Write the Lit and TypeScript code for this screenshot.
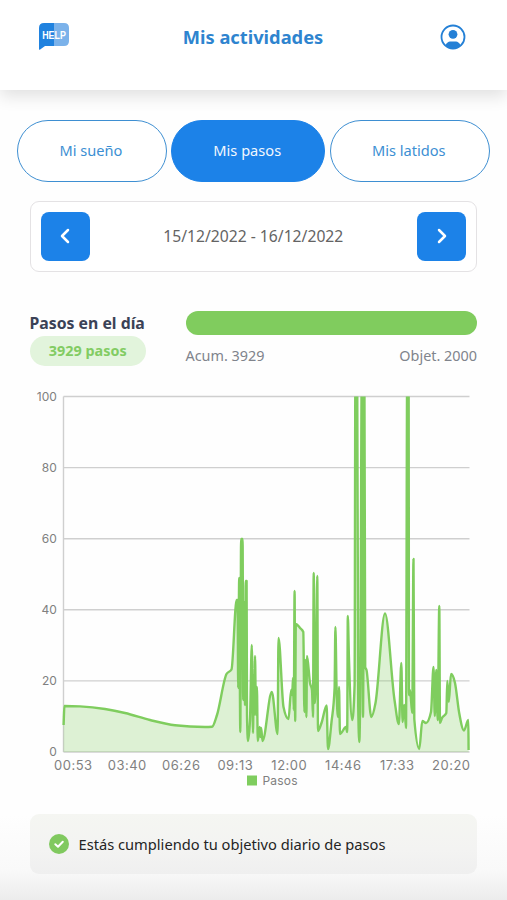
import { LitElement, html, css, svg } from "lit";
import { customElement, property } from "lit/decorators.js";
import { classMap } from "lit/directives/class-map.js";

type Pt = [number, number];

// Plot frame, in the chart's own units (1 unit = 1px).
const LEFT = 63.5;
const RIGHT = 469.5;
const TOP = 6.5;
const BASE = 362;

// Step samples: x position and height measured down from the top of the chart.
const SAMPLES: Pt[] = [
  [63.6, 335], [64.4, 316], [80, 316.4], [105, 319], [125, 323], [150, 330], [175, 335.3], [205, 337], [212, 336.8],
  [217, 325], [226.5, 284], [231.5, 279.5], [236.6, 210], [237.6, 210], [238.2, 298], [239.2, 188], [240.3, 342], [241.1, 149], [242.6, 149],
  [243.2, 310], [244, 212], [245, 315], [245.7, 191], [246.6, 191], [247, 325], [248, 351], [250, 330], [251.8, 255], [253, 343],
  [253.8, 285], [254.3, 325], [255, 266], [256, 325], [256.9, 297], [257.8, 351], [259.7, 337], [260.4, 347], [261.2, 338], [262.5, 351], [271.8, 302], [277.6, 344],
  [278.5, 248], [283.5, 317], [288.5, 329], [291.2, 300], [292.2, 305], [293, 288], [293.8, 320], [294.6, 201], [295.2, 331], [295.8, 234],
  [300, 238], [303.3, 242], [304.4, 322], [305.3, 270], [306.4, 327], [307, 266], [310, 293], [312, 300], [313, 327], [313.7, 183],
  [314.8, 313], [316, 280], [317.3, 186], [318, 341], [321.8, 332], [326.6, 315.5], [328, 359], [331.5, 332],
  [334.6, 298], [335.4, 237], [336.6, 300], [338, 327], [339, 297], [340, 344], [346, 337], [347.2, 342], [347.8, 226], [349, 270], [352.3, 330],
  [354.6, 295], [355.4, -20], [357.2, -20], [358.2, 315], [359.3, 352], [360.4, 280], [361.8, -20], [363, 327], [364.4, -20], [365.2, 277],
  [366.5, 280], [371.3, 327], [375.5, 313], [385, 223.5], [394.5, 310], [398.9, 334], [401.3, 273], [402.6, 332],
  [404.3, 315], [406, 338], [407.2, -20], [408.6, -20], [409, 305], [410, 300], [412.2, 323], [413.5, 169], [414.3, 329], [419.3, 359],
  [422.3, 331], [426, 333], [431, 322], [433.5, 277], [434.8, 326], [436.3, 280], [437.7, 330], [439.3, 216], [440, 333],
  [442, 328], [446.3, 323], [447.3, 291], [448.8, 312], [451, 284], [455, 293], [459.2, 323], [464, 340.5], [468.3, 330], [468.6, 360],
];

/** Smooth path that never overshoots its samples (Steffen tangents). */
function smooth(p: Pt[]): string {
  const n = p.length;
  const m = new Array<number>(n).fill(0);
  const slope = (i: number) => (p[i + 1][1] - p[i][1]) / (p[i + 1][0] - p[i][0]);
  for (let i = 1; i < n - 1; i++) {
    const a = slope(i - 1);
    const b = slope(i);
    const h0 = p[i][0] - p[i - 1][0];
    const h1 = p[i + 1][0] - p[i][0];
    const q = (a * h1 + b * h0) / (h0 + h1);
    m[i] = (Math.sign(a) + Math.sign(b)) * Math.min(Math.abs(a), Math.abs(b), 0.5 * Math.abs(q));
  }
  m[0] = slope(0);
  m[n - 1] = slope(n - 2);
  let d = `M${p[0][0]},${p[0][1]}`;
  for (let i = 0; i < n - 1; i++) {
    const h = (p[i + 1][0] - p[i][0]) / 3;
    d += `C${(p[i][0] + h).toFixed(2)},${(p[i][1] + m[i] * h).toFixed(2)} ${(p[i + 1][0] - h).toFixed(2)},${(p[i + 1][1] - m[i + 1] * h).toFixed(2)} ${p[i + 1][0]},${p[i + 1][1]}`;
  }
  return d;
}

@customElement("steps-chart")
export class StepsChart extends LitElement {
  static styles = css`
    :host { display: block; height: 400px; }
    svg { display: block; }
    .grid { stroke: #cfcfcf; stroke-width: 1.4; }
    .line { fill: none; stroke: #7fcd5e; stroke-width: 2.4; stroke-linejoin: round; }
    .area { fill: #7fcd5e; fill-opacity: 0.26; }
    text { font-family: Inter, "Liberation Sans", sans-serif; fill: #808080; }
    .y { font-size: 12px; text-anchor: end; letter-spacing: 0.1px; }
    .x { font-size: 13px; text-anchor: middle; letter-spacing: 0.5px; }
    .legend { font-size: 12px; letter-spacing: 0.2px; }
    .key { fill: #7fcd5e; }
  `;

  render() {
    const line = smooth(SAMPLES);
    const area = `${line}L468.6,${BASE}L${LEFT},${BASE}Z`;
    const step = (BASE - TOP) / 5;
    const hours = ["00:53", "03:40", "06:26", "09:13", "12:00", "14:46", "17:33", "20:20"];
    return html`<svg width="507" height="400" viewBox="0 0 507 400">
      <defs><clipPath id="plot"><rect x="61" y=${TOP} width="410" height=${BASE - TOP}></rect></clipPath></defs>
      ${[0, 1, 2, 3, 4, 5].map((i) => svg`
        <line class="grid" x1=${LEFT} x2=${RIGHT} y1=${TOP + i * step} y2=${TOP + i * step}></line>
        <text class="y" x="57" y=${TOP + i * step + 4}>${100 - i * 20}</text>`)}
      <line class="grid" x1=${LEFT} x2=${LEFT} y1=${TOP} y2=${BASE}></line>
      <g clip-path="url(#plot)">
        <path class="area" d=${area}></path>
        <path class="line" d=${line}></path>
      </g>
      ${hours.map((t, i) => svg`<text class="x" x=${73.3 + i * 54} y="380">${t}</text>`)}
      <rect class="key" x="247" y="385.500" width="10" height="10"></rect>
      <text class="legend" x="262.5" y="395">Pasos</text>
    </svg>`;
  }
}

@customElement("app-root")
export class AppRoot extends LitElement {
  @property() active = "Mis pasos";

  static styles = css`
    :host {
      display: flex; flex-direction: column; box-sizing: border-box; height: 900px; overflow: hidden;
      font-family: "Noto Sans", sans-serif;
      background: linear-gradient(#fefefe 0, #fefefe 815px, #f9f9f9 870px, #ececec 900px);
    }
    header {
      display: grid; grid-template-columns: 30px 1fr 30px; align-items: center; flex: none;
      box-sizing: border-box; height: 90px; padding: 0 39px 17px; background: #fff;
      box-shadow: 0 6px 16px rgba(0, 0, 0, 0.12);
    }
    header svg { display: block; overflow: visible; }
    .user { justify-self: end; margin-right: 2px; }
    h1 { margin: 0 1px 0 0; text-align: center; font-size: 18.3px; line-height: 24px; font-weight: 700; color: #2e84cf; }
    .help { font-size: 11.5px; font-weight: 700; font-family: "Liberation Sans", sans-serif; }
    .tabs { display: grid; grid-template-columns: 149.5px 154px 160px; gap: 4.5px; margin: 29.5px 0 0 17px; flex: none; }
    .tab {
      height: 62px; box-sizing: border-box; border: 1.4px solid #3e8fd2; border-radius: 31px; padding: 0 1.5px 1px 0;
      background: #fff; color: #3c8fd3; font: 14.6px "Noto Sans", sans-serif;
    }
    .on { background: #1c82e8; border-color: #1c82e8; color: #f1f7fe; }
    .range {
      display: flex; align-items: center; justify-content: space-between; flex: none; box-sizing: border-box;
      height: 71px; margin: 19px 30px 0 29.5px; padding: 0 10px; border: 1.5px solid #e4e2e4; border-radius: 9px;
      background: #fff; color: #646464; font-size: 15.7px;
    }
    .arrow {
      display: grid; place-items: center; width: 49px; height: 49px; border: 0; border-radius: 8px;
      padding: 0; background: #1c82e8;
    }
    .summary { display: grid; grid-template-columns: 116.5px 1fr; column-gap: 39.5px; margin: 39px 30px 0 29.5px; height: 61px; flex: none; }
    .title { font-size: 15.8px; line-height: 20px; font-weight: 700; color: #3b4256; margin-top: 2.5px; white-space: nowrap; }
    .badge {
      margin-top: 2.5px; height: 30px; border-radius: 15px; background: #e2f4dc; color: #82cc63;
      font-size: 14.4px; line-height: 29px; font-weight: 700; text-align: center;
    }
    .bar { height: 24.5px; border-radius: 13px; background: #80cc5e; }
    .caps { display: flex; justify-content: space-between; font-size: 14.4px; line-height: 20px; margin-top: 11px; color: #80848c; }
    steps-chart { margin-top: 18.5px; flex: none; }
    .notice {
      display: flex; align-items: center; gap: 10px; flex: none; box-sizing: border-box; height: 60px;
      margin: 24px 30px 0 29.5px; padding-left: 19px; border-radius: 9px;
      background: linear-gradient(#f5f6f2, #f3f3f2 60%, #efefef); font-size: 14.67px; color: #242424;
    }
  `;

  render() {
    return html`
      <header>
        <svg width="30" height="27" viewBox="0 0 30 27">
          <path d="M15 0H5Q0 0 0 5V26Q0 27.500 1.500 26.200L6 23H15Z" fill="#2082df"></path>
          <path d="M15 0H25Q30 0 30 5V18Q30 23 25 23H15Z" fill="#7bb2ea"></path>
          <text class="help" transform="translate(3.2 15.7) scale(0.77 1)" fill="#fff">HELP</text>
        </svg>
        <h1>Mis actividades</h1>
        <svg class="user" width="26" height="26" viewBox="0 0 26 26">
          <defs><clipPath id="disc"><circle cx="13" cy="13" r="11.500"></circle></clipPath></defs>
          <circle cx="13" cy="13" r="11.500" fill="#fff" stroke="#2480d6" stroke-width="1.800"></circle>
          <circle cx="13" cy="10.300" r="4.400" fill="#2480d6"></circle>
          <path clip-path="url(#disc)" d="M5.500 21Q7.500 17.500 10 17.500H16Q18.500 17.500 20.500 21L18 26H8Z" fill="#2480d6"></path>
        </svg>
      </header>
      <nav class="tabs">
        ${["Mi sueño", "Mis pasos", "Mis latidos"].map(
          (t) => html`<button class=${classMap({ tab: true, on: t === this.active })}>${t}</button>`
        )}
      </nav>
      <section class="range">
        <button class="arrow"><svg width="16" height="18" viewBox="0 0 16 18"><path d="M11 3L5 9L11 15" fill="none" stroke="#fff" stroke-width="2.500" stroke-linecap="round" stroke-linejoin="round"></path></svg></button>
        <span>15/12/2022 - 16/12/2022</span>
        <button class="arrow"><svg width="16" height="18" viewBox="0 0 16 18"><path d="M5 3L11 9L5 15" fill="none" stroke="#fff" stroke-width="2.500" stroke-linecap="round" stroke-linejoin="round"></path></svg></button>
      </section>
      <section class="summary">
        <div>
          <div class="title">Pasos en el día</div>
          <div class="badge">3929 pasos</div>
        </div>
        <div>
          <div class="bar"></div>
          <div class="caps"><span>Acum. 3929</span><span>Objet. 2000</span></div>
        </div>
      </section>
      <steps-chart></steps-chart>
      <section class="notice">
        <svg width="20" height="20" viewBox="0 0 20 20"><circle cx="10" cy="10" r="10" fill="#80c95f"></circle><path d="M6.300 10.300L9 12.800L13.800 7.800" fill="none" stroke="#fff" stroke-width="2" stroke-linecap="round" stroke-linejoin="round"></path></svg>
        <span>Estás cumpliendo tu objetivo diario de pasos</span>
      </section>
    `;
  }
}
